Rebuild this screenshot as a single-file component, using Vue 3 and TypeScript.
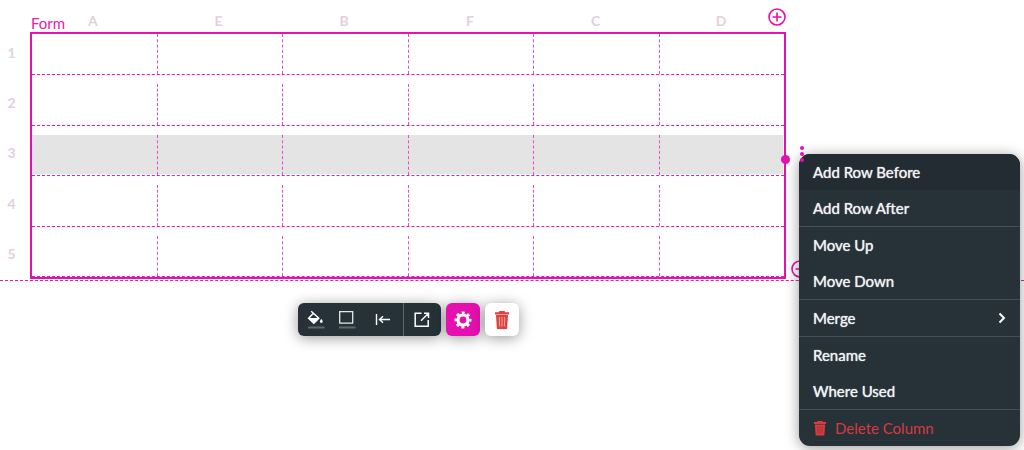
<script setup lang="ts">
import { ref } from 'vue'

interface MenuItem {
  label: string
  submenu?: boolean
  danger?: boolean
}

const columns: string[] = ['A', 'E', 'B', 'F', 'C', 'D']
const rows: number[] = [1, 2, 3, 4, 5]
const selectedRow = ref(3)

const menuGroups: MenuItem[][] = [
  [{ label: 'Add Row Before' }, { label: 'Add Row After' }],
  [{ label: 'Move Up' }, { label: 'Move Down' }],
  [{ label: 'Merge', submenu: true }],
  [{ label: 'Rename' }, { label: 'Where Used' }],
  [{ label: 'Delete Column', danger: true }],
]
const activeItem = ref('Add Row Before')
</script>

<template>
  <main class="editor">
    <section class="canvas">
      <header class="column-heads">
        <span class="form-name">Form</span>
        <span v-for="c in columns" :key="c" class="column-head">{{ c }}</span>
      </header>
      <div class="sheet">
        <div class="row-heads">
          <span v-for="r in rows" :key="r" class="row-head">{{ r }}</span>
        </div>
        <div class="form-grid">
          <div
            v-for="r in rows"
            :key="r"
            class="row"
            :class="{ selected: r === selectedRow }"
            @click="selectedRow = r"
          >
            <div v-for="c in columns" :key="c" class="cell"></div>
          </div>
          <span class="handle"></span>
          <button class="add add-column" type="button" aria-label="Add column">
            <svg viewBox="0 0 18 18"><circle cx="9" cy="9" r="8" /><path d="M9 4.5v9M4.5 9h9" /></svg>
          </button>
          <button class="add add-row" type="button" aria-label="Add row">
            <svg viewBox="0 0 18 18"><circle cx="9" cy="9" r="8" /><path d="M9 4.5v9M4.5 9h9" /></svg>
          </button>
        </div>
      </div>
    </section>

    <div class="toolbar-area">
      <div class="toolbar" role="toolbar" aria-label="Form tools">
        <div class="tool-group">
          <button class="tool" type="button" aria-label="Fill colour">
            <svg class="icon" viewBox="0 0 18 20">
              <path d="M4.2 1.2l7.600 7.100-5 5L1.600 8.200l4.600-4.800" fill="none" stroke="#fff" stroke-width="1.500" />
              <path d="M1.400 8h10.800l-5.300 5.600z" fill="#fff" />
              <path d="M14.300 8.700c1 1.500 1.400 2.100 1.400 2.800a1.400 1.400 0 0 1-2.800 0c0-.7.4-1.300 1.400-2.800z" fill="#fff" />
              <path d="M1 17.500h16.500" stroke="#5c686e" stroke-width="2" />
            </svg>
          </button>
          <button class="tool" type="button" aria-label="Border">
            <svg class="icon" viewBox="0 0 18 20">
              <path d="M1.700 1.700h13v11.500h-13z" fill="none" stroke="#e6e9ea" stroke-width="1.300" />
              <path d="M1 17.500h16.500" stroke="#5c686e" stroke-width="2" />
            </svg>
          </button>
          <button class="tool align" type="button" aria-label="Align left">
            <svg class="icon" viewBox="0 0 18 20">
              <path d="M2.500 4v11M5.500 9.500H16M9 6.300L5.500 9.500 9 12.700" fill="none" stroke="#fff" stroke-width="1.400" />
            </svg>
          </button>
          <button class="tool open" type="button" aria-label="Open">
            <svg class="icon" viewBox="0 0 18 20">
              <path d="M8.500 3.200H2.200v13h13V10M11 3.200h4.500V8M15.500 3.200L8 10.700" fill="none" stroke="#fff" stroke-width="1.500" />
            </svg>
          </button>
        </div>
        <button class="square settings" type="button" aria-label="Settings">
          <svg viewBox="0 0 18 18" fill="none" stroke="#fff">
            <circle cx="9" cy="9" r="5" stroke-width="3.200" />
            <circle cx="9" cy="9" r="7.300" stroke-width="2.400" stroke-dasharray="3 2.733" stroke-dashoffset="1.500" />
          </svg>
        </button>
        <button class="square remove" type="button" aria-label="Delete">
          <svg viewBox="0 0 18 18">
            <path d="M6.500 0h5l.8 1.300H16v2.200H2V1.300h3.700z" fill="#e0403f" />
            <path d="M3 4h12l-.9 14H3.900z" fill="#e0403f" />
            <path d="M6.300 6l.3 9.500M9 6v9.500M11.700 6l-.3 9.500" stroke="#f3a3a0" stroke-width="1" />
          </svg>
        </button>
      </div>
    </div>

    <nav class="menu" aria-label="Row actions">
      <ul v-for="(group, i) in menuGroups" :key="i" class="menu-group">
        <li v-for="item in group" :key="item.label">
          <button
            type="button"
            class="menu-item"
            :class="{ active: item.label === activeItem, danger: item.danger }"
            @mouseenter="activeItem = item.label"
          >
            <svg v-if="item.danger" class="trash" viewBox="0 0 14 16">
              <path d="M4.500 1h5l.6 1H13v2H1V2h2.900z" fill="#d73a3f" />
              <path d="M1.800 4.500h10.400l-.9 11H2.700z" fill="#d73a3f" />
              <path d="M4.700 6l.3 7.500M7 6v7.500M9.300 6L9 13.500" stroke="#8f353a" stroke-width=".8" />
            </svg>
            <span>{{ item.label }}</span>
            <svg v-if="item.submenu" class="chevron" viewBox="0 0 8 12">
              <path d="M1.500 1.500L6 6l-4.500 4.500" fill="none" stroke="#fff" stroke-width="2" />
            </svg>
          </button>
        </li>
      </ul>
    </nav>
    <button class="row-menu" type="button" aria-label="Row menu">
      <span></span><span></span><span></span>
    </button>
  </main>
</template>

<style>
body {
  background: #fff;
}
</style>

<style scoped>
.editor {
  position: relative;
  min-height: 100vh;
  overflow: hidden;
  font-family: Lato, "Liberation Sans", sans-serif;
  font-size: 15px;
  color: #f1f3f3;
}
button {
  margin: 0;
  padding: 0;
  border: 0;
  background: none;
  font: inherit;
  color: inherit;
  cursor: pointer;
}
svg {
  display: block;
}
.canvas {
  padding: 8px 238px 1px 0;
  border-bottom: 1px dashed #e619b3;
}
.column-heads {
  position: relative;
  display: flex;
  height: 24px;
  padding: 0 2px 0 30px;
  align-items: center;
  color: #e5cfdd;
  font-size: 14px;
  font-weight: 700;
}
.column-head {
  flex: 1;
  text-align: center;
}
.form-name {
  position: absolute;
  left: 31px;
  bottom: 0;
  line-height: 18px;
  font-size: 15px;
  font-weight: 400;
  color: #e619b3;
}
.sheet {
  display: flex;
}
.row-heads {
  display: grid;
  width: 30px;
  grid-auto-rows: 1fr;
  box-sizing: border-box;
  padding: 0 7px 5px 0;
  gap: 10px;
  color: #e5cfdd;
  font-size: 14px;
  font-weight: 700;
}
.row-head {
  display: flex;
  align-items: center;
  justify-content: center;
}
.form-grid {
  position: relative;
  display: flex;
  flex: 1;
  flex-direction: column;
  gap: 9px;
  box-sizing: border-box;
  height: 247px;
  border: 2px solid #e60fb0;
}
.row {
  display: flex;
  flex: 1;
  border-bottom: 1px dashed #e619b3;
}
.row:first-child {
  border-top: 1px dashed #e619b3;
  margin-top: -1px;
}
.row.selected {
  background: linear-gradient(#e4e4e4, #e4e4e4) no-repeat;
  background-size: calc(100% - 1px) calc(100% - 1px);
}
.cell {
  flex: 1;
  box-sizing: border-box;
  border-right: 1px dashed #e94cc2;
}
.cell:last-of-type {
  border-right: 0;
}
.handle {
  position: absolute;
  right: -6px;
  top: calc(50% - 1px);
  width: 9px;
  height: 9px;
  border-radius: 50%;
  background: #e60fb0;
}
.add {
  position: absolute;
  width: 18px;
  height: 18px;
}
.add svg {
  fill: none;
  stroke: #e60fb0;
  stroke-width: 1.600;
}
.add-column {
  right: -2px;
  top: -26px;
}
.add-row {
  right: -25px;
  bottom: -1px;
}
.toolbar-area {
  display: flex;
  justify-content: center;
  padding: 22px 238px 0 30px;
}
.toolbar {
  display: flex;
  gap: 5px;
}
.tool-group {
  display: flex;
  padding-left: 3px;
  border-radius: 6px;
  background: #263238;
  box-shadow: 0 2px 14px rgba(0, 0, 0, 0.4);
}
.tool {
  display: flex;
  width: 31px;
  height: 33px;
  align-items: center;
  justify-content: center;
}
.tool.align {
  width: 40px;
}
.tool.open {
  width: 38px;
  border-left: 1px solid #5d686d;
}
.icon {
  width: 18px;
  height: 20px;
}
.square {
  display: flex;
  width: 34px;
  height: 33px;
  align-items: center;
  justify-content: center;
  border-radius: 6px;
  box-shadow: 0 2px 14px rgba(0, 0, 0, 0.4);
}
.square svg {
  width: 18px;
  height: 18px;
}
.settings {
  background: #e60fb0;
}
.remove {
  background: #fff;
}
.menu {
  position: absolute;
  top: 154px;
  right: 4px;
  width: 221px;
  overflow: hidden;
  border-radius: 11px;
  background: #263238;
  box-shadow: 0 2px 14px rgba(0, 0, 0, 0.4);
}
.menu-group {
  margin: 0;
  padding: 0;
  list-style: none;
}
.menu-group + .menu-group {
  border-top: 1px solid #454e56;
}
.menu-item {
  display: flex;
  box-sizing: border-box;
  width: 100%;
  height: 36px;
  padding: 0 14px;
  align-items: center;
  text-shadow: 0 0 1px currentColor;
}
.menu-item.active {
  background: #222c32;
}
.menu-item.danger {
  color: #d73a3f;
  text-shadow: none;
}
.trash {
  width: 14px;
  height: 16px;
  margin-right: 8px;
}
.chevron {
  width: 8px;
  height: 12px;
  margin-left: auto;
}
.row-menu {
  position: absolute;
  top: 146px;
  right: 220px;
  display: flex;
  flex-direction: column;
  gap: 2px;
}
.row-menu span {
  width: 4px;
  height: 4px;
  border-radius: 50%;
  background: #e60fb0;
}
</style>
